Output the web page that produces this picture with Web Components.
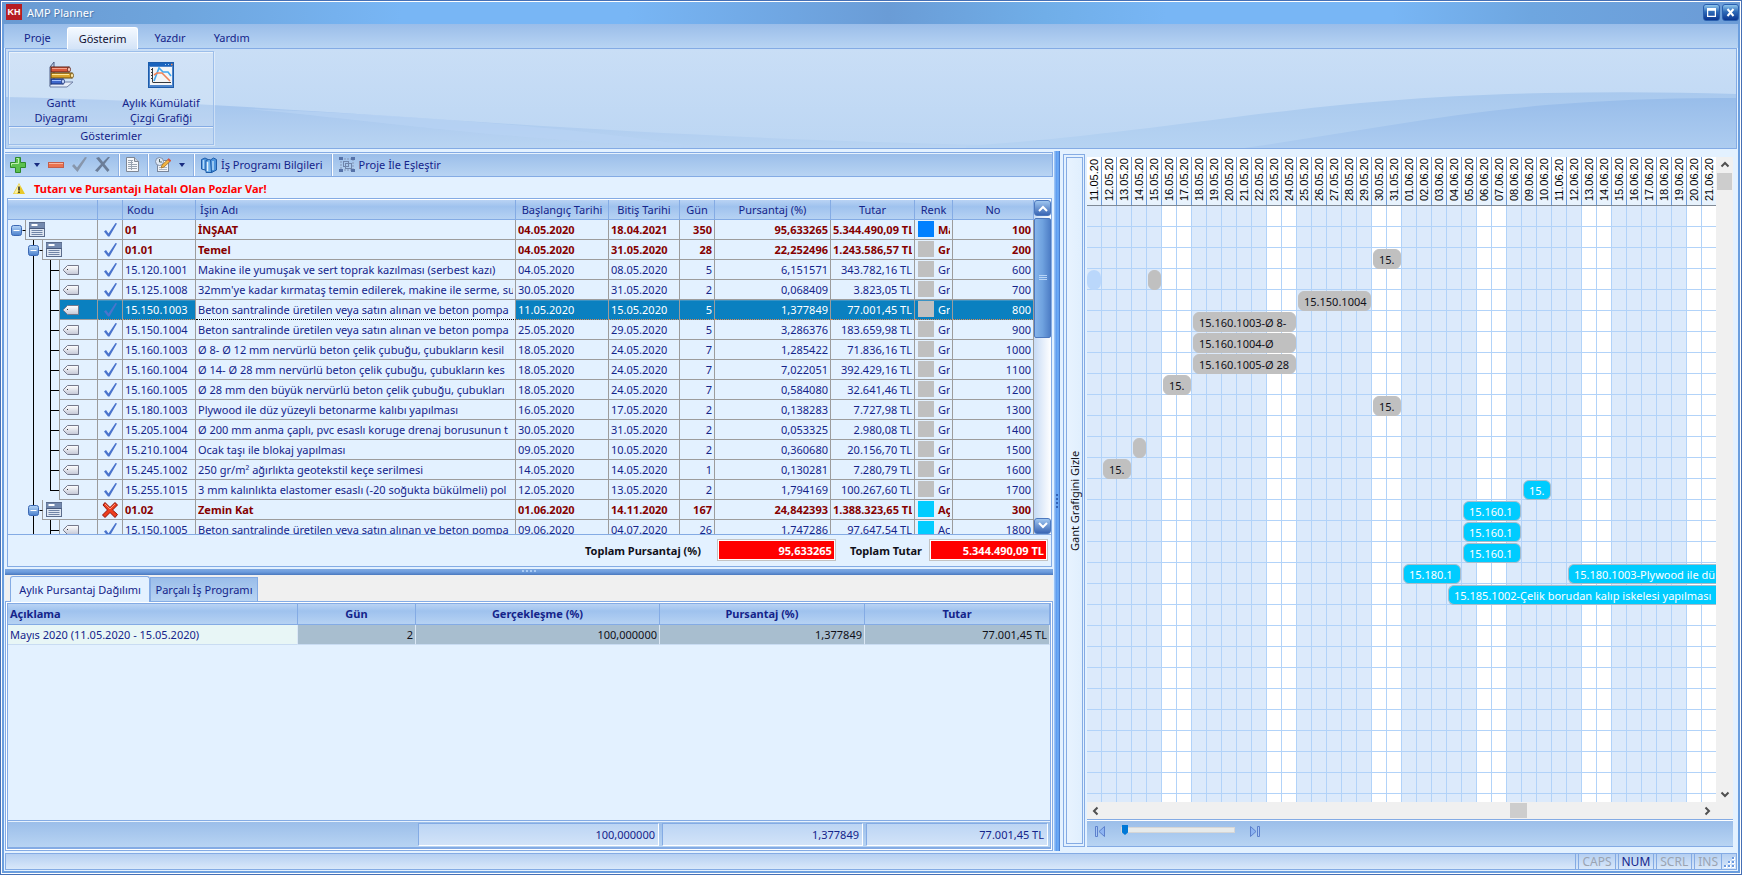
<!DOCTYPE html>
<html lang="tr">
<head>
<meta charset="utf-8">
<title>AMP Planner</title>
<style>
html,body{margin:0;height:100%}
body{font:11px/15px "Noto Sans","Open Sans",sans-serif;color:#14248a;background:#e3f1ff;
--line:#84abe4;--navy:#14248a;--pale:#e3f1ff;--bar:linear-gradient(#9abde9,#b8d4f3);--head:linear-gradient(#b9d3f4,#9fc2ee 35%,#b6d2f3)}
</style>
</head>
<body>
<amp-window></amp-window>
<script>
const RESET = `:host,*{box-sizing:border-box}button,input{font:inherit;color:inherit;margin:0;padding:0;border:0;background:none}svg{display:block}`;
const define = (name, css, html) => customElements.define(name, class extends HTMLElement {
  constructor(){
    super();
    this.attachShadow({mode:'open'}).innerHTML = `<style>${RESET}${css}</style>` + (typeof html === 'function' ? html(this) : html);
  }
});

/* ---------- icons ---------- */
const ICONS = {
gantt:[26,28,`<path d="M2 6l4-5v20l-4 4z" fill="#c5d0e2" stroke="#4c5d84"/><path d="M2 26v-2l4-3h19l-6 5z" fill="#e6edf8" stroke="#6f80a6"/>
<rect x="3" y="6" width="18" height="5" fill="#d9593c" stroke="#5a2015"/><path d="M4 7.500h15" stroke="#f6a48e"/><ellipse cx="21" cy="8.500" rx="1.500" ry="2.500" fill="#f7c5b8" stroke="#5a2015" stroke-width=".8"/>
<rect x="3" y="12" width="21" height="5" fill="#dba42c" stroke="#6b4a0c"/><path d="M4 13.500h17" stroke="#ffe79a"/><ellipse cx="24" cy="14.500" rx="1.500" ry="2.500" fill="#ffe9a8" stroke="#6b4a0c" stroke-width=".8"/>
<rect x="3" y="18" width="12" height="5" fill="#3f68cc" stroke="#182f74"/><path d="M4 19.500h10" stroke="#a5c2ff"/><ellipse cx="15" cy="20.500" rx="1.500" ry="2.500" fill="#c5d8ff" stroke="#182f74" stroke-width=".8"/>`],
chart:[26,26,`<rect x=".5" y=".5" width="25" height="25" fill="#4f86cb" stroke="#1c5cab"/><rect x="1" y="1" width="24" height="3" fill="#1963bd"/><path d="M17 2.500h1M20 2.500h1" stroke="#a9d0f8"/><path d="M23 2.500h1.500" stroke="#ff8b4a" stroke-width="1.500"/>
<rect x="2" y="5" width="22" height="18" fill="#f4f5f6"/><path d="M4.500 6v14.500M3 7.500h2M3 10.500h2M3 13.500h2M3 16.500h2M5 20.500h18" stroke="#33383f" fill="none"/><path d="M6 19l5-13 4 4h5l3 4" fill="none" stroke="#42a7ee" stroke-width="1.600"/><path d="M6 13l3-2h5l8 8" fill="none" stroke="#f08256" stroke-width="1.600"/>`],
plus:[16,16,`<path d="M5.500.5h5v5h5v5h-5v5h-5v-5h-5v-5h5z" fill="#5cc04d" stroke="#2e8a2c"/><path d="M6.500 1.500h2v5h-7v2" fill="none" stroke="#c1f0b2"/>`],
minus:[16,6,`<rect x=".5" y=".5" width="15" height="5" fill="#ea7350" stroke="#c35e4a"/><path d="M1 1.500h14" stroke="#f9b8a1"/>`],
check:[15,15,`<path d="M0 9l2-2 3 3.500L13 0l2 .5L5.500 15z" fill="#8796ac"/>`],
cross:[15,15,`<path d="M1 1l3-1 4 5 5-5h2L9.500 7l5 6-2 2-5-6-5 6L0 13.500 6 7z" fill="#6b7d98"/>`],
drop:[6,4,`<path d="M0 0h6L3 4z" fill="#182c80"/>`],
doc:[13,15,`<path d="M.5.5h8l4 4v10H.5z" fill="#f6f8fb" stroke="#7e8794"/><path d="M8.500.5v4h4" fill="#cdd4de" stroke="#7e8794"/><path d="M2 3.500h5M2 5.500h5M2 7.500h9M2 9.500h9M2 11.500h9M5.500 3v10" stroke="#9aa4b1"/>`],
plan:[16,15,`<rect x="2.500" y="3.500" width="11" height="11" fill="#f1f4f8" stroke="#79869a"/><path d="M4 10.500h8M4 12.500h8" stroke="#adb6c3"/><circle cx="4.500" cy="4.500" r="4" fill="#dfe9f5" stroke="#7f8fa8"/><path d="M4.500 2v3H7" fill="none" stroke="#566"/><path d="M6 11l1-3 6.500-6 2 2L9 10z" fill="#f2b440" stroke="#a0702a" stroke-width=".8"/><path d="M13 2l2.500 2.200" stroke="#d25648" stroke-width="2"/>`],
book:[16,16,`<path d="M.5 2.500L4 1l3 1.500v12L4 13l-3.500-1z" fill="#4c93dc" stroke="#1f5ca8"/><path d="M2.500 3v9" stroke="#b3dafa" stroke-width="1.500"/><path d="M5 3.500l3-1 3 1v12H5z" fill="#6cb0ec" stroke="#1f5ca8"/><path d="M6.500 5v9" stroke="#e5f3fd" stroke-width="1.500"/><path d="M9.500 3l3-2 3 1.500V13l-5 2.500z" fill="#4c93dc" stroke="#1f5ca8"/><path d="M12 4v9" stroke="#b3dafa" stroke-width="1.500"/>`],
match:[16,15,`<path d="M2 2h12v11H2z" fill="none" stroke="#8397b8" stroke-dasharray="2 1"/><rect x="4.500" y="4.500" width="5" height="5" fill="none" stroke="#7086ac"/><rect x="6.500" y="6.500" width="6" height="5" fill="none" stroke="#7086ac"/><path d="M0 0h4v3H0zM12 0h4v3h-4zM0 12h4v3H0zM12 12h4v3h-4z" fill="#5672a8"/>`],
warn:[12,11,`<path d="M6 0l6 11H0z" fill="#e9c92a"/><path d="M6 1l1.500 3L4 10.500H1z" fill="#fbf0a0"/><path d="M6 3.500v4M6 8.500v1.500" stroke="#222" stroke-width="1.500"/>`],
tick:[13,14,`<path d="M0 8.500L2 7l2.500 3.500L11.500 0l1.500.5L5.500 13.500H4z" fill="#4b74cc"/>`],
bad:[16,16,`<path d="M1 3l2-2.500L8 5.500l5-5 2.500 2.500L10.500 8l5 4.500-2.500 3L8 10.500l-5 5L.5 13l5-5z" fill="#ee3c1c" stroke="#8f1208"/><path d="M3 2l5 5 5-5" fill="none" stroke="#ff9578"/>`],
first:[10,11,`<path d="M.5.5h2v10h-2z" fill="#a8c8f6" stroke="#5c80cc"/><path d="M9.500.5v10L4 5.500z" fill="#8db4f2" stroke="#5c80cc"/>`],
last:[10,11,`<path d="M7.500.5h2v10h-2z" fill="#a8c8f6" stroke="#5c80cc"/><path d="M.5.5v10L6 5.500z" fill="#8db4f2" stroke="#5c80cc"/>`],
up:[10,7,`<path d="M1.500 5.500L5 2l3.500 3.500" fill="none" stroke="#505050" stroke-width="2"/>`],
down:[10,7,`<path d="M1.500 1.500L5 5l3.500-3.500" fill="none" stroke="#505050" stroke-width="2"/>`],
left:[7,10,`<path d="M5.500 1.500L2 5l3.500 3.500" fill="none" stroke="#505050" stroke-width="2"/>`],
right:[7,10,`<path d="M1.500 1.500L5 5 1.500 8.500" fill="none" stroke="#505050" stroke-width="2"/>`],
grip:[12,11,`<path d="M8 0h3v3H8zM4 4h3v3H4zM8 4h3v3H8zM0 8h3v3H0zM4 8h3v3H4zM8 8h3v3H8z" fill="#fff"/><path d="M8 0h2v2H8zM4 4h2v2H4zM8 4h2v2H8zM0 8h2v2H0zM4 8h2v2H4zM8 8h2v2H8z" fill="#6c9ae0"/>`]
};
define('amp-icon', `:host{display:block;flex:none}`, el => {
  const [w,h,g] = ICONS[el.getAttribute('name')] || [0,0,''];
  return `<svg width="${w}" height="${h}" viewBox="0 0 ${w} ${h}" aria-hidden="true">${g}</svg>`;
});
const icon = n => { const [w,h,g]=ICONS[n]; return `<svg width="${w}" height="${h}" viewBox="0 0 ${w} ${h}" aria-hidden="true">${g}</svg>`; };

/* ---------- title ---------- */
define('title-bar', `
:host{display:flex;align-items:center;height:22px;padding:0 1px 2px 4px;color:#fff;
background:linear-gradient(90deg,#6a9ad2,#6ea5dd 10%,#78b6f5 23%,#78b6f5 36%,#6a9cd6 51%,#70aee8 60%,#78b6f5 67%,#78b6f5 80%,#6ea6e0 88%,#6b9bd6)}
.logo{width:16px;height:16px;background:#b71c22;font:bold 9px/16px "Liberation Sans",sans-serif;text-align:center}
h1{flex:1;margin:0 0 0 5px;font:inherit;text-shadow:1px 1px 1px #4775ac}
.ctl{width:17px;height:17px;margin-left:2px;border-radius:3px;border:1px solid #2a5fae;background:linear-gradient(#8fc7ee,#2e6ab8 45%,#0a3590);display:grid;place-items:center}`,
`<span class="logo">KH</span><h1>AMP Planner</h1>
<button class="ctl" aria-label="Ekranı kapla"><svg width="9" height="9"><path d="M.5.5h8v8h-8zM0 2h9" fill="none" stroke="#fff" stroke-width="1.500"/></svg></button>
<button class="ctl" aria-label="Kapat"><svg width="9" height="9"><path d="M1.500 1l6 7M7.500 1l-6 7" stroke="#fff" stroke-width="2"/></svg></button>`);

/* ---------- ribbon ---------- */
define('ribbon-bar', `
:host{display:block}
.tabs{display:flex;gap:4px;height:24px;padding:3px 0 0 8px;background:var(--bar)}
.tabs button{padding:0 12px}
.tabs .on{color:#101030;margin-bottom:-1px;position:relative;border:1px solid #fff;border-bottom:0;border-radius:3px 3px 0 0;padding:0 11px;background:linear-gradient(#f4f9ff,#d3e3f7)}
.pane{display:grid;height:101px;margin:0 1px;border:1px solid var(--line);box-shadow:inset 0 1px #fff;overflow:hidden}
.pane>*{grid-area:1/1}
.wave{width:100%;height:99px}
.group{width:206px;height:94px;margin:2px 0 0 2px;border:1px solid #9cbeea;box-shadow:inset 1px 1px #ffffff88,1px 1px #ffffff66;background:#ffffff2a;display:grid;grid-template-rows:75px 1fr;z-index:1}
.btns{display:grid;grid-template-columns:104px 96px;border-bottom:1px solid var(--line)}
.btns button{display:flex;flex-direction:column;align-items:center;padding-top:9px}
.btns svg{height:28px;margin-bottom:6px}
.cap{text-align:center;line-height:17px;box-shadow:inset 0 1px #ffffff99}`,
`<div class="tabs" role="tablist"><button role="tab">Proje</button><button role="tab" class="on" aria-selected="true">Gösterim</button><button role="tab">Yazdır</button><button role="tab">Yardım</button></div>
<div class="pane">
<svg class="wave" viewBox="0 0 1730 99" preserveAspectRatio="none"><defs>
<linearGradient id="a" x2="0" y2="1"><stop stop-color="#c9def6"/><stop offset="1" stop-color="#bcd6f3"/></linearGradient>
<linearGradient id="b" x2="0" y2="1"><stop stop-color="#a3c4ed"/><stop offset="1" stop-color="#b9d4f2"/></linearGradient>
<linearGradient id="c" x2="0" y2="1"><stop stop-color="#98bdea"/><stop offset="1" stop-color="#adccf0"/></linearGradient>
<linearGradient id="d" x2="0" y2="1"><stop stop-color="#a9c9ee"/><stop offset="1" stop-color="#b6d3f2"/></linearGradient></defs>
<path d="M0 0h1730v99H0z" fill="url(#a)"/>
<path d="M0 48C300 54 560 88 990 96V99H0z" fill="url(#b)"/>
<path d="M240 60C360 70 500 92 700 99C600 82 420 66 240 60z" fill="#b8d3f3" opacity=".7"/>
<path d="M960 97C1180 82 1300 48 1540 44Q1640 42 1730 45V99H960z" fill="url(#d)"/>
<path d="M1238 99C1330 86 1430 66 1540 56Q1640 48 1730 49V99z" fill="url(#c)"/></svg>
<div class="group"><div class="btns"><button>${icon('gantt')}Gantt<br>Diyagramı</button><button>${icon('chart')}Aylık Kümülatif<br>Çizgi Grafiği</button></div><div class="cap">Gösterimler</div></div>
</div>`);

/* ---------- command strip and warning ---------- */
define('tool-strip', `
:host{display:block}
.bar{display:flex;align-items:center;height:25px;padding-left:5px;border:1px solid var(--line);border-left:0;box-shadow:inset 0 1px #e6f1fd;background:var(--bar)}
.bar button{display:flex;align-items:center;gap:4px;margin-right:8px}
.bar i{width:2px;height:22px;border-left:1px solid #8db1e4;background:#fff;margin-right:6px}
.warn{display:flex;align-items:center;gap:9px;height:21px;padding:2px 0 0 8px;margin:0;color:#f00;font-weight:bold}`,
`<div class="bar" role="toolbar">
<button aria-label="Ekle">${icon('plus')}</button><button aria-label="Ekleme seçenekleri">${icon('drop')}</button>
<button aria-label="Sil">${icon('minus')}</button><button aria-label="Onayla">${icon('check')}</button><button aria-label="İptal">${icon('cross')}</button><i></i>
<button aria-label="Belge">${icon('doc')}</button><i></i>
<button aria-label="Planla">${icon('plan')}</button><button aria-label="Plan seçenekleri">${icon('drop')}</button><i></i>
<button>${icon('book')}İş Programı Bilgileri</button><i></i>
<button>${icon('match')}Proje İle Eşleştir</button></div>
<p class="warn" role="alert">${icon('warn')}Tutarı ve Pursantajı Hatalı Olan Pozlar Var!</p>`);

/* ---------- work item tree ---------- */
const G='#c0c0c0', C='#00ccff';
const ITEMS = [
[0,'01','İNŞAAT','04.05.2020','18.04.2021','350','95,633265','5.344.490,09 TL','#0080ff','Ma','100'],
[1,'01.01','Temel','04.05.2020','31.05.2020','28','22,252496','1.243.586,57 TL',G,'Gr','200'],
[2,'15.120.1001','Makine ile yumuşak ve sert toprak kazılması (serbest kazı)','04.05.2020','08.05.2020','5','6,151571','343.782,16 TL',G,'Gr','600'],
[2,'15.125.1008',"32mm'ye kadar kırmataş temin edilerek, makine ile serme, su",'30.05.2020','31.05.2020','2','0,068409','3.823,05 TL',G,'Gr','700'],
[2,'15.150.1003','Beton santralinde üretilen veya satın alınan ve beton pompa','11.05.2020','15.05.2020','5','1,377849','77.001,45 TL',G,'Gr','800'],
[2,'15.150.1004','Beton santralinde üretilen veya satın alınan ve beton pompa','25.05.2020','29.05.2020','5','3,286376','183.659,98 TL',G,'Gr','900'],
[2,'15.160.1003','Ø 8- Ø 12 mm nervürlü beton çelik çubuğu, çubukların kesil','18.05.2020','24.05.2020','7','1,285422','71.836,16 TL',G,'Gr','1000'],
[2,'15.160.1004','Ø 14- Ø 28 mm nervürlü beton çelik çubuğu, çubukların kes','18.05.2020','24.05.2020','7','7,022051','392.429,16 TL',G,'Gr','1100'],
[2,'15.160.1005','Ø 28 mm den büyük nervürlü beton çelik çubuğu, çubukları','18.05.2020','24.05.2020','7','0,584080','32.641,46 TL',G,'Gr','1200'],
[2,'15.180.1003','Plywood ile düz yüzeyli betonarme kalıbı yapılması','16.05.2020','17.05.2020','2','0,138283','7.727,98 TL',G,'Gr','1300'],
[2,'15.205.1004','Ø 200 mm anma çaplı, pvc esaslı koruge drenaj borusunun t','30.05.2020','31.05.2020','2','0,053325','2.980,08 TL',G,'Gr','1400'],
[2,'15.210.1004','Ocak taşı ile blokaj yapılması','09.05.2020','10.05.2020','2','0,360680','20.156,70 TL',G,'Gr','1500'],
[2,'15.245.1002','250 gr/m² ağırlıkta geotekstil keçe serilmesi','14.05.2020','14.05.2020','1','0,130281','7.280,79 TL',G,'Gr','1600'],
[2,'15.255.1015','3 mm kalınlıkta elastomer esaslı (-20 soğukta bükülmeli) pol','12.05.2020','13.05.2020','2','1,794169','100.267,60 TL',G,'Gr','1700'],
[1,'01.02','Zemin Kat','01.06.2020','14.11.2020','167','24,842393','1.388.323,65 TL',C,'Aç','300'],
[2,'15.150.1005','Beton santralinde üretilen veya satın alınan ve beton pompa','09.06.2020','04.07.2020','26','1,747286','97.647,54 TL',C,'Aç','1800']
];
const SELECTED = 4;
const treeCell = (lvl, i) => {
  const x = 17.5 + 17*lvl, last = i === 13;
  let s = '';
  if (i === SELECTED) s += `<path d="M52 0h37v19H52z" fill="#0a80c0"/>`;
  s += `<path d="M${x} 0v20M${x} 19.500H89" stroke="#9c9c9c" fill="none"/>`;
  if (lvl > 0) s += `<path d="M25.500 0v20" stroke="#000"/>`;
  if (lvl === 2) s += `<path d="M42.500 0v${last?10.5:20}M42 10.500h9" stroke="#000"/><path d="M55.500 9.500l4-4h11v9h-11l-4-4z" fill="url(#tg)" stroke="#75798c"/><path d="M59 9.500h1" stroke="#333"/>`;
  else s += `<path d="M${x-3} 10.500h3" stroke="#000"/><rect x="${x-14}" y="5.500" width="10" height="10" rx="2" fill="url(#ex)" stroke="#3b68b4"/><path d="M${x-12} 10.500h6" stroke="#fff"/>
<rect x="${x+4}" y="2.500" width="15" height="14" fill="#dfe7f2" stroke="#5b6c8c"/><path d="M${x+4} 3h15v5h-15z" fill="#7389ae"/><path d="M${x+6} 5h6" stroke="#fff" stroke-width="2"/><path d="M${x+4} 8.500h15" stroke="#47597c"/><path d="M${x+6} 10.500h11M${x+6} 12.500h11M${x+6} 14.500h11" stroke="#6f84a6"/>`;
  return `<svg width="89" height="20" aria-hidden="true"><defs><linearGradient id="ex" x2="0" y2="1"><stop stop-color="#b6d6f8"/><stop offset="1" stop-color="#4a80cc"/></linearGradient><linearGradient id="tg" x2="0" y2="1"><stop stop-color="#fff"/><stop offset="1" stop-color="#c3c7d6"/></linearGradient></defs>${s}</svg>`;
};
define('task-grid', `
:host{display:flex;flex-direction:column;min-height:0;margin:0 1px 0 2px;border:1px solid var(--line)}
.view{flex:1;min-height:0;display:flex;border-top:1px solid #fff;overflow:hidden}
.rows{flex:1;min-width:0;overflow:hidden}
table{width:100%;table-layout:fixed;border-collapse:separate;border-spacing:0}
th{height:20px;padding:0;font-weight:normal;text-align:center;background:var(--head);border-right:1px solid var(--line);border-bottom:1px solid var(--line);line-height:18px;white-space:nowrap}
th.l{text-align:left;padding-left:4px}
td{height:20px;padding:0;border-right:1px solid #9c9c9c;border-bottom:1px solid #9c9c9c;line-height:19px;white-space:nowrap}
td>div{margin:0 2px;overflow:hidden;height:19px}
td.tree{border-bottom:0}
td.n{text-align:right}
td.mk svg{margin:auto}
.grp{font-weight:bold;color:#850000}
.sw>div{display:flex;gap:4px;align-items:flex-start}
.sw i{flex:none;width:16px;height:16px;margin:1px 0 0 1px}
.sel td:not(.tree):not(.name){background:#0a80c0;color:#fff;border-bottom:1px dotted #e08a50;box-shadow:inset 0 1px #3b93c4}
.sel .name{border-bottom:1px dotted #000}
.bar{width:17px;display:flex;flex-direction:column;background:linear-gradient(90deg,#c7dbf5,#fff)}
.bar button{height:16px;border-radius:3px;border:1px solid #4c78be;background:linear-gradient(#9fc6f0,#3a66b4);display:grid;place-items:center}
.thumb{height:120px;margin-top:2px;border:1px solid #4c78be;border-radius:2px;background:linear-gradient(90deg,#86b4ea,#6fa2df 50%,#4f7fc7);display:grid;place-items:center}
.gap{flex:1}
.total{flex:none;height:32px;border-top:1px solid var(--line);display:flex;align-items:center;justify-content:flex-end;padding-right:3px;color:#101018;font-weight:bold}
.total input{width:119px;height:22px;margin:0 14px 0 16px;background:#f00;border:1px solid #c3c3c3;box-shadow:inset 0 0 0 1px #fff;color:#fff;text-align:right;padding-right:3px}
.total input:last-child{margin:0 0 0 7px}`,
`<div class="view"><div class="rows"><table>
<colgroup><col style="width:90px"><col style="width:25px"><col style="width:73px"><col><col style="width:93px"><col style="width:71px"><col style="width:35px"><col style="width:116px"><col style="width:84px"><col style="width:38px"><col style="width:81px"></colgroup>
<thead><tr><th></th><th></th><th class="l">Kodu</th><th class="l">İşin Adı</th><th>Başlangıç Tarihi</th><th>Bitiş Tarihi</th><th>Gün</th><th>Pursantaj (%)</th><th>Tutar</th><th>Renk</th><th>No</th></tr></thead>
<tbody>${ITEMS.map((r,i)=>`<tr class="${r[0]<2?'grp':''}${i===SELECTED?' sel':''}"><td class="tree">${treeCell(r[0],i)}</td><td class="mk">${icon(i===14?'bad':'tick')}</td><td><div>${r[1]}</div></td><td class="name"><div>${r[2]}</div></td><td><div>${r[3]}</div></td><td><div>${r[4]}</div></td><td class="n"><div>${r[5]}</div></td><td class="n"><div>${r[6]}</div></td><td class="n"><div>${r[7]}</div></td><td class="sw"><div><i style="background:${r[8]}"></i>${r[9]}</div></td><td class="n"><div>${r[10]}</div></td></tr>`).join('')}</tbody></table></div>
<div class="bar"><button aria-label="Yukarı"><svg width="10" height="7"><path d="M1 6l4-4 4 4" fill="none" stroke="#fff" stroke-width="2"/></svg></button><div class="thumb"><svg width="8" height="6"><path d="M0 .5h8M0 2.500h8M0 4.500h8" stroke="#b9d5f6"/></svg></div><div class="gap"></div><button aria-label="Aşağı"><svg width="10" height="7"><path d="M1 1l4 4 4-4" fill="none" stroke="#fff" stroke-width="2"/></svg></button></div></div>
<div class="total"><label for="p">Toplam Pursantaj (%)</label><input id="p" readonly value="95,633265"><label for="t">Toplam Tutar</label><input id="t" readonly value="5.344.490,09 TL"></div>`);

/* ---------- monthly distribution ---------- */
define('month-panel', `
:host{display:flex;flex-direction:column;min-height:0;background:#f0f0f0}
.tabs{display:flex;flex:none;height:27px;padding:1px 0 0 5px;margin-bottom:-1px;z-index:1}
.tabs button{padding:0 6px}
.tabs .on{width:140px;border:1px solid var(--line);border-bottom:0;border-radius:3px 3px 0 0;background:var(--pale)}
.tabs .off{width:108px;height:25px;padding:0 4px;margin-top:1px;border:1px solid var(--line);background:var(--bar)}
.box{flex:1;min-height:0;border:1px solid var(--line);padding:1px;background:#fff}
.in{height:100%;display:flex;flex-direction:column;border:1px solid var(--line);background:var(--pale)}
table{width:100%;table-layout:fixed;border-collapse:separate;border-spacing:0}
th{height:21px;padding:0;line-height:19px;background:var(--head);border-right:1px solid var(--line);border-bottom:1px solid var(--line)}
th.l{text-align:left;padding-left:2px}
td{height:20px;line-height:19px;padding:0 2px;color:#101018;background:#a8becf;border-right:1px solid #dbe8f6;border-bottom:1px solid #c9dcf2;text-align:right}
td.l{text-align:left;color:var(--navy);background:#e8f6f6}
.gap{flex:1}
.sum{height:28px;display:grid;grid-template-columns:1fr 241px 201px 182px;column-gap:3px;padding:2px 2px 0 0;border:1px solid var(--line);border-width:1px 0;background:var(--bar);box-shadow:inset 0 1px #e6f1fd}
.sum span{height:23px;line-height:21px;text-align:right;padding-right:3px;border:1px solid var(--line);border-color:var(--line) #fff #fff var(--line);background:linear-gradient(#bcd5f4,#d2e3f8)}
.sum span:first-child{visibility:hidden}`,
`<div class="tabs" role="tablist"><button role="tab" class="on" aria-selected="true">Aylık Pursantaj Dağılımı</button><button role="tab" class="off">Parçalı İş Programı</button></div>
<div class="box"><div class="in"><table><colgroup><col><col style="width:118px"><col style="width:244px"><col style="width:205px"><col style="width:185px"></colgroup>
<thead><tr><th class="l">Açıklama</th><th>Gün</th><th>Gerçekleşme (%)</th><th>Pursantaj (%)</th><th>Tutar</th></tr></thead>
<tbody><tr><td class="l">Mayıs 2020 (11.05.2020 - 15.05.2020)</td><td>2</td><td>100,000000</td><td>1,377849</td><td>77.001,45 TL</td></tr></tbody></table>
<div class="gap"></div><div class="sum"><span></span><span>100,000000</span><span>1,377849</span><span>77.001,45 TL</span></div></div></div>`);

/* ---------- gantt ---------- */
const DAYS = Array.from({length:42},(_,i)=>{const d=new Date(Date.UTC(2020,4,11+i));return String(d.getUTCDate()).padStart(2,'0')+'.'+String(d.getUTCMonth()+1).padStart(2,'0')+'.20'});
/* row, first day, length in days, kind, label */
const BARS = [[2,19,2,'g','15.'],[3,0,1,'f',''],[3,4,1,'g',''],[4,14,5,'g','15.150.1004'],[5,7,7,'g','15.160.1003-Ø 8-'],[6,7,7,'g','15.160.1004-Ø'],[7,7,7,'g','15.160.1005-Ø 28'],[8,5,2,'g','15.'],[9,19,2,'g','15.'],[11,3,1,'g',''],[12,1,2,'g','15.'],
[13,29,2,'c','15.'],[14,25,4,'c','15.160.1'],[15,25,4,'c','15.160.1'],[16,25,4,'c','15.160.1'],[17,21,4,'c','15.180.1'],[17,32,10,'c o','15.180.1003-Plywood ile dü'],[18,24,18,'c o','15.185.1002-Çelik borudan kalıp iskelesi yapılması']];
define('gantt-chart', `
:host{display:grid;grid-template-columns:22px minmax(0,1fr);grid-template-rows:minmax(0,1fr);column-gap:2px;min-height:0;padding:3px 4px 4px 2px}
.hide{border:1px solid var(--line);padding:2px;background:var(--pale);color:#101018;min-width:0}
.hide span{display:grid;place-items:center;height:100%;border:1px solid var(--line);writing-mode:vertical-rl;transform:rotate(180deg);background:linear-gradient(90deg,#e0effe,#e8f3ff)}
.main{display:grid;grid-template-columns:minmax(0,1fr) 17px;grid-template-rows:minmax(0,1fr) 17px 28px;margin-top:3px;min-height:0}
.sheet{overflow:hidden;display:flex;flex-direction:column}
.days{display:flex;flex:none;height:49px;background:linear-gradient(#fff 40%,#e6f1fc);border-bottom:1px solid #808a96;color:#000;font:11px/14px "Liberation Sans",Arial,sans-serif}
.days span{flex:none;width:15px;height:48px;border-left:1px solid #6c9bd8;writing-mode:vertical-rl;transform:rotate(180deg);padding-top:4px}
.days span:last-child{border:0}
.plan{flex:1;min-height:0;width:630px;min-width:100%;overflow:hidden;display:grid;grid-template-columns:repeat(42,15px);grid-template-rows:repeat(29,21px);
background:repeating-linear-gradient(90deg,transparent 0 14px,#b2d3f9 14px 15px),repeating-linear-gradient(transparent 0 20px,#b2d3f9 20px 21px),repeating-linear-gradient(90deg,#dceafb 0 75px,#fff 75px 105px)}
.g,.c{margin:1px 1px 0;padding-left:5px;border:1px solid #c0c0c0;border-radius:6px;background:#c0c0c0;color:#101018;line-height:19px;white-space:nowrap;overflow:hidden}
.c{border-color:#a9bccb;background:#00ccff;color:#fff}
.o{border-right:0;border-radius:6px 0 0 6px}
.f{margin:1px 1px 0 0;border-radius:7px;background:#bad7fb}
.vs,.hs{background:#f0f0f0;display:flex;align-items:center;justify-content:space-between}
.vs{flex-direction:column;padding:4px 0}
.vs i{width:15px;height:17px;background:#cdcdcd;margin-top:5px}
.hs i{width:17px;height:15px;background:#cdcdcd}
.grow{flex:1}
.hs{padding:0 5px}
.corner{background:#f0f0f0}
.zoom{grid-column:1/3;display:flex;align-items:flex-start;padding:5px 0 0 8px;border:1px solid var(--line);border-left:0;border-right:0;box-shadow:inset 0 1px #fff;background:var(--bar)}
.zoom button{padding-top:1px}
input{appearance:none;-webkit-appearance:none;width:114px;height:10px;margin:0 15px 0 16px}
input::-webkit-slider-runnable-track{height:6px;background:#e7eaea;border:1px solid #d6d6d6}
input::-webkit-slider-thumb{-webkit-appearance:none;width:6px;height:10px;margin-top:-3px;background:#0078d7;clip-path:polygon(0 0,100% 0,100% 75%,50% 100%,0 75%)}`,
`<button class="hide"><span>Gant Grafigini Gizle</span></button>
<div class="main"><div class="sheet"><div class="days">${DAYS.map(d=>`<span>${d}</span>`).join('')}</div>
<div class="plan">${BARS.map(([r,c,n,k,t])=>`<div class="${k}" style="grid-row:${r+1};grid-column:${c+1}/span ${n}">${t}</div>`).join('')}</div></div>
<div class="vs">${icon('up')}<i></i><b class="grow"></b>${icon('down')}</div>
<div class="hs">${icon('left')}<b style="flex:414"></b><i></i><b style="flex:178"></b>${icon('right')}</div><div class="corner"></div>
<div class="zoom"><button aria-label="Başa git">${icon('first')}</button><input type="range" min="0" max="100" value="0" aria-label="Yakınlaştırma"><button aria-label="Sona git">${icon('last')}</button></div></div>`);

/* ---------- status ---------- */
define('status-strip', `
:host{display:block;padding:2px 1px 1px;background:#e3f1ff}
div{display:flex;height:17px;border:1px solid var(--line);background:linear-gradient(#b5cff1,#d9e8fa);gap:2px}
span{font-size:12px;line-height:15px;border:1px solid var(--line);border-width:0 1px;padding:0 3px;color:#9aa4b2;text-align:center}
.m{flex:1;border-left:0}
.n{color:var(--navy)}
amp-icon{margin-top:3px}`,
`<div role="status"><span class="m"></span><span>CAPS</span><span class="n">NUM</span><span>SCRL</span><span>INS</span><amp-icon name="grip"></amp-icon></div>`);
customElements.get('amp-icon');

/* ---------- window ---------- */
define('amp-window', `
:host{display:flex;flex-direction:column;height:100vh;min-height:640px;border:1px solid #4670b5;outline:1px solid #fff;outline-offset:-2px;padding:1px}
.body{flex:1;min-height:0;display:flex;flex-direction:column;border:2px solid #6b9ede;border-top:0}
main{flex:1;min-height:0;display:grid;grid-template-columns:minmax(0,1048fr) 8px minmax(0,676fr);grid-template-rows:minmax(0,1fr);padding:2px 1px 0;background:var(--pale)}
.left{display:flex;flex-direction:column;min-height:0;padding-top:1px}
task-grid{flex:368 1 0}
.hsplit{flex:none;height:6px;margin-top:2px;background:linear-gradient(#7fa9e2,#6c9cdd 50%,#4a78be);display:grid;place-items:center}
month-panel{flex:277 1 0}
.vsplit{margin:0 1px;background:linear-gradient(90deg,#a9cdf7,#5f9df0 40%,#6fb0fb 70%,#3c6cc0);display:grid;place-items:center}`,
`<title-bar></title-bar><div class="body"><ribbon-bar></ribbon-bar><main>
<div class="left"><tool-strip></tool-strip><task-grid></task-grid><div class="hsplit"><svg width="14" height="3"><path d="M0 1h2M4 1h2M8 1h2M12 1h2" stroke="#a9cbf5" stroke-width="2"/></svg></div><month-panel></month-panel></div>
<div class="vsplit"><svg width="3" height="14"><path d="M1 0v2M1 4v2M1 8v2M1 12v2" stroke="#2f62b8" stroke-width="2"/></svg></div>
<gantt-chart></gantt-chart></main><status-strip></status-strip></div>`);
</script>
</body>
</html>
